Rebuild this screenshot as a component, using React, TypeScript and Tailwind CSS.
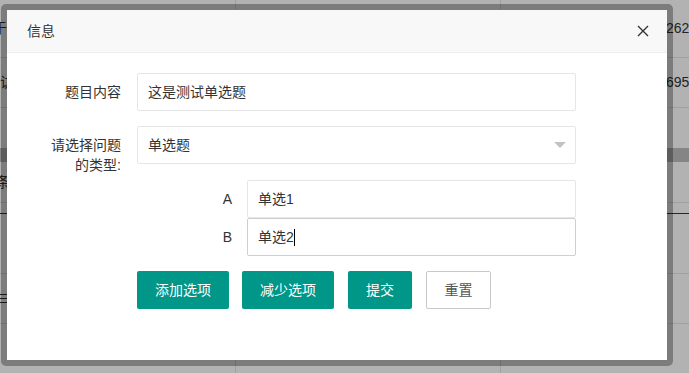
import React from 'react';

const font = "font-['Liberation_Sans','Noto_Sans_CJK_SC',sans-serif]";

type RowProps = {
    h: string;
    border?: string;
    left?: React.ReactNode;
    right?: string;
    bg?: string;
};

// table rows of the page that sits behind the dialog
const BgRow = ({ h, border = 'border-b border-[#e6e6e6]', left, right, bg = '' }: RowProps) => (
    <div className={`flex ${h} ${border} ${bg}`}>
        <div className="w-[236px] border-r border-[#e6e6e6] flex items-center overflow-hidden">{left}</div>
        <div className="w-[265px] border-r border-[#e6e6e6]" />
        <div className="flex-1 flex items-center overflow-hidden whitespace-nowrap pl-[165px]">{right}</div>
    </div>
);

const App = () => {
    return (
        <div className={`relative w-[689px] h-[373px] overflow-hidden bg-white text-[14px] text-[#333] ${font}`}>
            <div className="flex flex-col">
                <BgRow h="h-[58px]" left={<span className="-ml-[7px]">于</span>} right="262" />
                <BgRow h="h-[50px]" left={<span className="ml-0">访</span>} right="695" />
                <BgRow h="h-[40px]" border="" />
                <BgRow h="h-[14px]" border="" bg="bg-[#bfbfbf]" />
                <BgRow h="h-[41px]" left={<span className="-ml-[4px]">条</span>} />
                <BgRow h="h-[11px]" border="border-b border-[#2f3a4c]" />
                <BgRow h="h-[60px]" />
                <BgRow
                    h="h-[50px]"
                    left={
                        <div className="flex flex-col gap-[3px]">
                            <div className="w-[7px] h-[1px] bg-[#333]" />
                            <div className="w-[7px] h-[1px] bg-[#333]" />
                            <div className="w-[7px] h-[1px] bg-[#333]" />
                        </div>
                    }
                />
                <BgRow h="h-[50px]" border="" />
            </div>

            <div className="absolute inset-0 bg-black/30" />

            <div className="absolute left-[1px] top-[4px] w-[672px] h-[362px] rounded-[5px] bg-black/30 p-[6px]">
                <div className="w-full h-full bg-white flex flex-col">
                    <div className="flex h-[43px] shrink-0 items-center justify-between border-b border-[#eee] bg-[#f8f8f8] pl-[20px] pr-[18px]">
                        <span>信息</span>
                        <svg width="12" height="12" viewBox="0 0 12 12">
                            <path d="M1 1 L11 11 M11 1 L1 11" stroke="#333" strokeWidth="1.4" />
                        </svg>
                    </div>

                    <div className="flex flex-col pt-[20px]">
                        <div className="flex">
                            <div className="w-[114px] text-right leading-[38px]">题目内容</div>
                            <div className="ml-[16px] w-[439px] h-[38px] border border-[#e6e6e6] rounded-[2px] pl-[10px] leading-[36px]">
                                这是测试单选题
                            </div>
                        </div>

                        <div className="flex h-[38px] mt-[15px]">
                            <div className="w-[114px] h-[38px] text-right leading-[20px] pt-[9px] whitespace-nowrap">
                                请选择问题<br />的类型:
                            </div>
                            <div className="ml-[16px] w-[439px] h-[38px] border border-[#e6e6e6] rounded-[2px] pl-[10px] pr-[9px] flex items-center justify-between">
                                <span>单选题</span>
                                <span className="w-0 h-0 border-x-[6px] border-x-transparent border-t-[6px] border-t-[#c2c2c2]" />
                            </div>
                        </div>

                        <div className="flex flex-col mt-[16px]">
                            <div className="flex">
                                <div className="w-[225px] text-right leading-[38px]">A</div>
                                <div className="ml-[15px] w-[329px] h-[38px] border border-[#e6e6e6] rounded-[2px] pl-[10px] leading-[36px]">
                                    单选1
                                </div>
                            </div>
                            <div className="flex">
                                <div className="w-[225px] text-right leading-[38px]">B</div>
                                <div className="ml-[15px] w-[329px] h-[38px] border border-[#cfcfcf] rounded-[2px] pl-[10px] flex items-center">
                                    <span>单选2</span>
                                    <span className="w-px h-[17px] bg-black" />
                                </div>
                            </div>
                        </div>

                        <div className="flex mt-[15px] ml-[130px]">
                            <button className="w-[92px] h-[38px] rounded-[2px] bg-[#009688] text-white">添加选项</button>
                            <button className="ml-[13px] w-[92px] h-[38px] rounded-[2px] bg-[#009688] text-white">减少选项</button>
                            <button className="ml-[14px] w-[64px] h-[38px] rounded-[2px] bg-[#009688] text-white">提交</button>
                            <button className="ml-[14px] w-[65px] h-[38px] rounded-[2px] border border-[#c9c9c9] bg-white text-[#555]">重置</button>
                        </div>
                    </div>
                </div>
            </div>
        </div>
    );
};

export default App;
